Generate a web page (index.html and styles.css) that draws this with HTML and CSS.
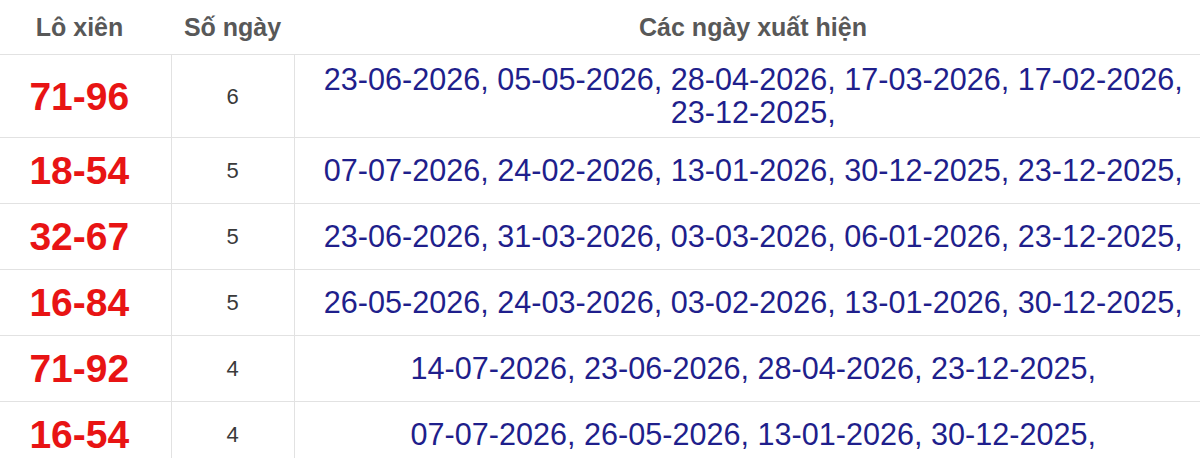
FILE: index.html
```html
<!DOCTYPE html>
<html lang="vi">
<head>
<meta charset="utf-8">
<title>Lô xiên</title>
<link rel="stylesheet" href="styles.css">
</head>
<body>
<table class="lx-table">
  <colgroup>
    <col class="c-pair">
    <col class="c-count">
    <col class="c-dates">
  </colgroup>
  <thead>
    <tr>
      <th>Lô xiên</th>
      <th>Số ngày</th>
      <th>Các ngày xuất hiện</th>
    </tr>
  </thead>
  <tbody>
    <tr>
      <td class="pair">71-96</td>
      <td class="count">6</td>
      <td class="dates">23-06-2026, 05-05-2026, 28-04-2026, 17-03-2026, 17-02-2026, 23-12-2025,</td>
    </tr>
    <tr>
      <td class="pair">18-54</td>
      <td class="count">5</td>
      <td class="dates">07-07-2026, 24-02-2026, 13-01-2026, 30-12-2025, 23-12-2025,</td>
    </tr>
    <tr>
      <td class="pair">32-67</td>
      <td class="count">5</td>
      <td class="dates">23-06-2026, 31-03-2026, 03-03-2026, 06-01-2026, 23-12-2025,</td>
    </tr>
    <tr>
      <td class="pair">16-84</td>
      <td class="count">5</td>
      <td class="dates">26-05-2026, 24-03-2026, 03-02-2026, 13-01-2026, 30-12-2025,</td>
    </tr>
    <tr>
      <td class="pair">71-92</td>
      <td class="count">4</td>
      <td class="dates">14-07-2026, 23-06-2026, 28-04-2026, 23-12-2025,</td>
    </tr>
    <tr>
      <td class="pair">16-54</td>
      <td class="count">4</td>
      <td class="dates">07-07-2026, 26-05-2026, 13-01-2026, 30-12-2025,</td>
    </tr>
  </tbody>
</table>
</body>
</html>
```

FILE: styles.css
```css
html, body {
  margin: 0;
  padding: 0;
  background: #ffffff;
  overflow: hidden;
}

.lx-table {
  margin-left: -12px;
  width: 1224px;
  table-layout: fixed;
  border-collapse: collapse;
  font-family: "Liberation Sans", Arial, sans-serif;
}

.c-pair { width: 183px; }
.c-count { width: 123px; }
.c-dates { width: 918px; }

.lx-table th {
  height: 54px;
  padding: 0;
  font-size: 25px;
  font-weight: bold;
  color: #585858;
  text-align: center;
  vertical-align: middle;
  border-bottom: 1px solid #e2e2e2;
}

.lx-table td {
  padding: 8px 10px;
  text-align: center;
  vertical-align: middle;
  border-top: 1px solid #e2e2e2;
  border-bottom: 1px solid #e2e2e2;
}

.lx-table td + td {
  border-left: 1px solid #e2e2e2;
}

.pair {
  font-size: 39px;
  line-height: 49px;
  font-weight: bold;
  color: #e81414;
}

.count {
  font-size: 22px;
  line-height: 33px;
  color: #3a3a3a;
}

.dates {
  font-size: 30.6px;
  line-height: 33px;
  color: #1f1f8c;
}
```
